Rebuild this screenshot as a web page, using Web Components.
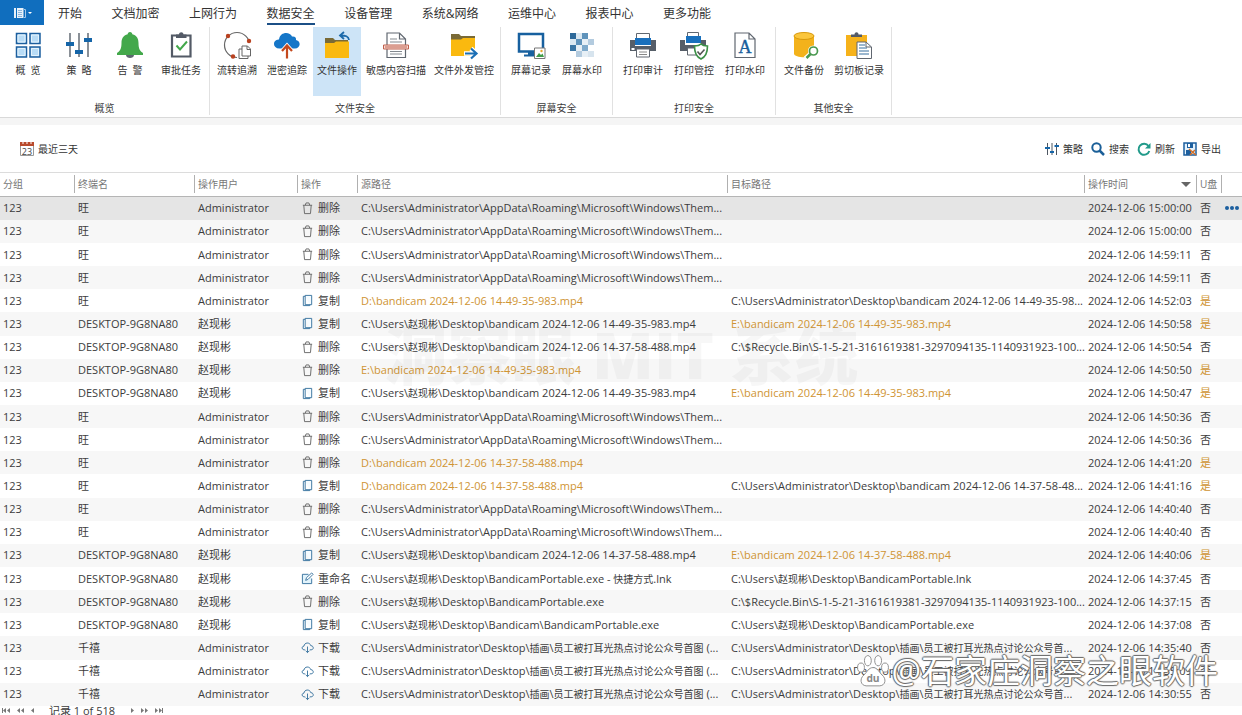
<!DOCTYPE html>
<html lang="zh-CN">
<head>
<meta charset="UTF-8">
<meta name="viewport" content="width=device-width, initial-scale=1.0">
<title>文件操作</title>
<style>
  body {
    margin: 0;
    font-family: "Open Sans", "Noto Sans CJK SC", sans-serif;
    font-size: 11px;
    color: #3c3c3c;
    background: #fff;
  }
</style>
</head>
<body>
<audit-app></audit-app>

<script>
const BLUE = "#1565a8";

// Large icons use a 28 unit box, small ones a 14 unit box
const icons = {
  grid: [28, `<g fill="#b8dcf6" stroke="#1d5f9e" stroke-width="1.5"><path d="M2.5 2.5h10v10h-10zM16 2.5h10v10H16zM2.5 16h10v10h-10zM16 16h10v10H16z"/></g><path d="M4 4h7v7H4zM17.500 4h7v7h-7zM4 17.500h7v7H4zM17.500 17.500h7v7h-7z" fill="none" stroke="#e4f3fd"/>`],
  sliders: [28, `<path d="M5 2v24M14 2v24M23 2v24" stroke="#4d5661" stroke-width="1.300"/><path d="M1 11h8v4H1zM10 19h8v4h-8zM19 7h8v4h-8z" fill="${BLUE}"/>`],
  bell: [28, `<path d="M10 24h8c0 4-8 4-8 0z" fill="#5d6670"/><path d="M14 1c1.500 0 2.300 1 2.300 2.300C21 4.500 22.500 8 22.500 12c0 6 1.500 8 4.500 10v2H1v-2c3-2 4.500-4 4.500-10 0-4 1.500-7.500 6.200-8.700C11.700 2 12.500 1 14 1z" fill="#43a84b"/>`],
  task: [28, `<path d="M5 4.500h18.500v21H5z" fill="#fff" stroke="#535a66" stroke-width="2.200"/><path d="M9 7V3.500h3c0-3 4.500-3 4.500 0h3V7z" fill="#535a66"/><path d="M9.500 14.500l3.500 4 7-8" fill="none" stroke="#43a84b" stroke-width="2"/>`],
  trace: [28, `<circle cx="14" cy="14" r="12.500" fill="none" stroke="#666" stroke-width="1.200"/><path d="M14 12h16v16H14z" fill="#fff"/><g fill="#b9411f"><circle cx="5" cy="5" r="2.200"/><circle cx="26" cy="10" r="2.200"/><circle cx="10" cy="25.500" r="2.200"/></g><path d="M19 18h-3v9.500h9V25M19 15h5.500l3 3v7H19zM24 15v3.500h3.500" fill="#fff" stroke="#666"/>`],
  cloud: [28, `<path d="M6.500 17.500C-1 17.500-.500 8 6 8.500 7 .500 17 .500 19 5.500c3-.500 4.500 1.500 4 3.500 5.500 1 4.500 8.500-1 8.500z" fill="#1576c8"/><path d="M14 28V15M8.500 20.500L14 14.500l5.500 6" fill="none" stroke="#fff" stroke-width="4"/><path d="M14 27.500V15M9 20l5-5.500 5 5.500" fill="none" stroke="#c4491d" stroke-width="2.200"/>`],
  folderBack: [28, `<path d="M2 7h8l2 2h13v4H2z" fill="#7a6a36"/><path d="M2 12h9l2-1.500h13V27H2z" fill="#fab90f"/><path d="M17.500 4.500c5 0 8 .500 8.500 4.500M21 1l-4 3.500L21 8" fill="none" stroke="#1c6aab" stroke-width="1.800"/>`],
  scan: [28, `<path d="M5 2h12.500l6 6v18.500H5zM17.500 2v6h6" fill="#fff" stroke="#606770" stroke-width="1.200"/><path d="M8 8h7M8 11h12M8 20.500h12M8 23h12" stroke="#83898f"/><path d="M1.500 14h25v4h-25z" fill="#f7dcd6" stroke="#c0604c"/><path d="M3 16h22" stroke="#c0604c"/>`],
  folderOut: [28, `<path d="M1 3h8l2 2h14v4H1z" fill="#7a6a36"/><path d="M1 8.500h10l2-1.500h12v18H1z" fill="#fab90f"/><path d="M14 22.500h12M21 17.500l5.500 5-5.500 5" fill="none" stroke="#fff" stroke-width="4.500"/><path d="M15 22.500h11M21 17.500l5.500 5-5.500 5" fill="none" stroke="#1c6fb5" stroke-width="2.200"/>`],
  screen: [28, `<path d="M2 3h24v17.500H2z" fill="#fff" stroke="#17609f" stroke-width="2.500"/><path d="M11 21h6v3h-6zM7 23.500h11v2H7z" fill="#17609f"/><path d="M17.500 17h10.500v10.500H17.500z" fill="#fff" stroke="#777"/><path d="M19 26l3-4 2 2 1.500-1.500 1.500 3.500z" fill="#419c49"/><circle cx="24.500" cy="20" r="1.200" fill="#e5a72a"/>`],
  mosaic: [28, `<path d="M2 2h6v6H2z" fill="#2d699a"/><path d="M14 2h6v6h-6zM8 8h6v6H8z" fill="#5f93bb"/><path d="M2 14h6v6H2z" fill="#3b76a4"/><path d="M14 14h6v6h-6z" fill="#7faacb"/><path d="M8 2h6v6H8zM2 8h6v6H2z" fill="#dbe8f1"/><path d="M20 8h6v6h-6zM8 20h6v6H8z" fill="#b3cbdf"/><path d="M20 20h6v6h-6z" fill="#d7e4ee"/><path d="M14 8h6v6h-6zM8 14h6v6H8zM14 20h6v6h-6z" fill="#e7eff5"/>`],
  printer: [28, `<path d="M7.500 2.500h13V9h-13z" fill="#fff" stroke="#606770"/><path d="M1 9h5v6h16V9h5v11H1z" fill="#565e68"/><path d="M6 7h16v7H6z" fill="#1970bd"/><path d="M7.500 18h13v8h-13z" fill="#fff" stroke="#606770"/><path d="M10 21h8M10 23.500h8" stroke="#888"/><path d="M2.500 17h3v2h-3z" fill="#fff"/>`],
  printerShield: [28, `<path d="M7.500 1.500h11V7h-11z" fill="#fff" stroke="#606770"/><path d="M0 9h5v5h16V9h5v11H0z" fill="#565e68"/><path d="M6 5h15v7H6z" fill="#1970bd"/><path d="M7.500 17h9v7h-9z" fill="#fff" stroke="#606770"/><path d="M21 13c2 2 4.500 2 6.500 2 0 7-2 11-6.500 13-4.500-2-6.500-6-6.500-13 2 0 4.500 0 6.500-2z" fill="#fff" stroke="#3c9047" stroke-width="1.600"/><path d="M17.500 20.500l2.500 3 4.500-5" fill="none" stroke="#555" stroke-width="1.600"/>`],
  letterPage: [28, `<path d="M4 2h14l6 6v18.500H4zM18 2v6h6" fill="#fff" stroke="#606770" stroke-width="1.200"/><text x="14" y="22" text-anchor="middle" font-family="Liberation Serif, serif" font-size="18" fill="#185e9c" stroke="#185e9c" stroke-width=".4">A</text>`],
  database: [28, `<path d="M4 5v17.500c0 5 20 5 20 0V5z" fill="#f3b21b"/><ellipse cx="14" cy="5" rx="10" ry="3.500" fill="#fbc63c" stroke="#d8990c"/><circle cx="23.500" cy="20" r="5.500" fill="#fff"/><path d="M20 23.500l-4.500 4" stroke="#fff" stroke-width="5"/><circle cx="23.500" cy="20" r="4" fill="#fff" stroke="#48984e" stroke-width="1.700"/><path d="M20.500 23l-4 4" stroke="#48984e" stroke-width="2.500"/>`],
  clipboard: [28, `<path d="M1 4h21v21H1z" fill="#f6b21a"/><path d="M6 6V3.500h3.500c0-3 4-3 4 0H17V6z" fill="#535a66"/><path d="M12 11h9l5.500 5v11.500H12z" fill="#fff" stroke="#606770"/><path d="M14 14h6M14 17h8M14 20h10M14 23h10" stroke="#356f9f"/><path d="M21 11v5h5.500" fill="none" stroke="#606770"/>`],
  policy: [14, `<path d="M2.500 1v12M7 1v12M11.500 1v12" stroke="#4d5661"/><path d="M0 5h5v2H0zM5 9h4v2H5zM9.500 3H14v2H9.500z" fill="${BLUE}"/>`],
  search: [14, `<circle cx="5.500" cy="5.500" r="4.200" fill="none" stroke="#1b5f98" stroke-width="2"/><path d="M8.500 8.500L13 13" stroke="#1b5f98" stroke-width="2.500"/>`],
  refresh: [14, `<path d="M11.500 4A5.500 5.500 0 1 0 12.300 9" fill="none" stroke="#219a8a" stroke-width="2"/><path d="M13.500 1v5.500H8z" fill="#219a8a"/>`],
  save: [14, `<path d="M1 1h12v12H1z" fill="#e4f2fc" stroke="#1d5f9e" stroke-width="1.500"/><path d="M4 1h6v5H4zM3 8h5v5H3z" fill="#1d5f9e"/><path d="M5 2h2v3H5z" fill="#fff"/><path d="M6 7l7 6M12 8l-5 5" stroke="#d37028" stroke-width="1.500"/>`],
  calendar: [14, `<path d="M.500 1.500h13v12H.500z" fill="#fff" stroke="#999"/><path d="M0 0h14v4H0z" fill="#b94a2c"/><path d="M3 0v2M7 0v2M11 0v2" stroke="#fff"/><text x="7" y="12.500" text-anchor="middle" font-size="9" fill="#444">23</text>`],
  trash: [14, `<path d="M2 3.500h10M4.500 3.500L5.500 1h3l1 2.500M3 3.500l.800 9h6.400l.800-9" fill="none" stroke="#666"/>`],
  copy: [14, `<path d="M4.500 1.500h7v10h-7zM4.500 2.500h-2v10h7v-1" fill="#f5fbff" stroke="#35709d"/>`],
  rename: [14, `<path d="M8 2.500H1.500v10h10V7" fill="#e2f3fb" stroke="#35709d"/><path d="M5 9l1-3 5.500-5 1.500 1.500-5.500 5.500z" fill="#fff" stroke="#35709d"/>`],
  download: [14, `<path d="M4.500 9.500H3.500C.500 9.500.500 5.500 3.200 5.500 3.500 1.500 9.500.800 10.500 5c3.500 0 3.500 4.500.500 4.500H9.500" fill="none" stroke="#35709d"/><path d="M7 6v6.500M5 10.500l2 2 2-2" fill="none" stroke="#35709d"/>`],
  ledger: [14, `<path d="M1 2h9.500v10H1z" fill="#e8f1f9"/><path d="M3.500 2v10" stroke="#106ebe"/><path d="M5 4.500h4M5 6.500h4M5 8.500h4M5 10.500h4" stroke="#8bb5dc"/><path d="M11 3.500h1.500v8H11" fill="none" stroke="#9fc4e6"/>`],
  paw: [28, `<g fill="#fff" stroke="#888" stroke-width=".8"><ellipse cx="9.500" cy="5" rx="3" ry="4.500"/><ellipse cx="18.500" cy="5" rx="3" ry="4.500"/><ellipse cx="3.500" cy="11" rx="3" ry="4"/><ellipse cx="24.500" cy="11" rx="3" ry="4"/><path d="M14 11c4 0 5 4 8 6.500 4 3.500 3 9-2 9.500H8c-5-.500-6-6-2-9.500C9 15 10 11 14 11z"/></g><text x="14" y="24" text-anchor="middle" font-size="9" font-weight="700" fill="#888">du</text>`]
};

class UiIcon extends HTMLElement {
  connectedCallback() {
    const [box, body] = icons[this.getAttribute("name")];
    this.attachShadow({ mode: "open" }).innerHTML = `
      <style>
        :host { display: block; flex: none; width: ${box}px; height: ${box}px; }
        svg { display: block; width: 100%; height: 100%; overflow: visible; }
      </style>
      <svg viewBox="0 0 ${box} ${box}" aria-hidden="true">${body}</svg>
    `;
  }
}

class MenuTabs extends HTMLElement {
  connectedCallback() {
    const tabs = ["开始", "文档加密", "上网行为", "数据安全", "设备管理", "系统&amp;网络", "运维中心", "报表中心", "更多功能"];
    this.attachShadow({ mode: "open" }).innerHTML = `
      <style>
        :host { display: flex; height: 25px; }
        .file {
          display: flex;
          align-items: center;
          justify-content: center;
          gap: 1px;
          width: 44px;
          padding: 0;
          border: 0;
          background: #106ebe;
        }
        .file::after {
          content: "";
          border: 2px solid transparent;
          border-top-color: #fff;
          border-bottom: 0;
        }
        nav {
          display: flex;
          justify-content: space-between;
          flex: 0 1 653px;
          margin-left: 14px;
        }
        a {
          box-sizing: border-box;
          height: 25px;
          font-size: 12px;
          line-height: 28px;
          color: #333;
          text-decoration: none;
          white-space: nowrap;
        }
        a.active { border-bottom: 2px solid #1b4f86; }
      </style>
      <button class="file" aria-label="菜单"><ui-icon name="ledger"></ui-icon></button>
      <nav>${tabs.map(t => `<a href="#"${t === "数据安全" ? ' class="active"' : ""}>${t}</a>`).join("")}</nav>
    `;
  }
}

class RibbonGroup extends HTMLElement {
  connectedCallback() {
    this.attachShadow({ mode: "open" }).innerHTML = `
      <style>
        :host {
          display: flex;
          flex-direction: column;
          border-right: 1px solid #e1e1e1;
          padding: 0 var(--pad, 4px);
        }
        .items { display: flex; gap: var(--gap, 3px); }
        .title {
          margin-top: 5px;
          font-size: 10px;
          line-height: 14px;
          text-align: center;
        }
      </style>
      <div class="items"><slot></slot></div>
      <div class="title">${this.getAttribute("label")}</div>
    `;
  }
}

class RibbonButton extends HTMLElement {
  connectedCallback() {
    this.attachShadow({ mode: "open" }).innerHTML = `
      <style>
        :host { display: block; }
        button {
          display: flex;
          flex-direction: column;
          align-items: center;
          gap: 4px;
          min-width: 48px;
          height: 69px;
          padding: 4px 3px 0;
          border: 0;
          background: none;
          font: inherit;
          font-size: 10px;
          line-height: 14px;
          color: #333;
        }
        span { white-space: pre; }
        :host([active]) button { background: #cde4f7; }
      </style>
      <button><ui-icon name="${this.getAttribute("icon")}"></ui-icon><span><slot></slot></span></button>
    `;
  }
}

class ToolButton extends HTMLElement {
  connectedCallback() {
    this.attachShadow({ mode: "open" }).innerHTML = `
      <style>
        :host { display: block; }
        button {
          display: flex;
          align-items: center;
          gap: 4px;
          padding: 0;
          border: 0;
          background: none;
          font: inherit;
          font-size: 10px;
          line-height: 14px;
          color: #333;
        }
      </style>
      <button><ui-icon name="${this.getAttribute("icon")}"></ui-icon><span><slot></slot></span></button>
    `;
  }
}

const THEMES = "C:\\Users\\Administrator\\AppData\\Roaming\\Microsoft\\Windows\\Them...";
const CN_DESK = "C:\\Users\\赵现彬\\Desktop\\";
const ADMIN_DESK = "C:\\Users\\Administrator\\Desktop\\";
const RECYCLE = "C:\\$Recycle.Bin\\S-1-5-21-3161619381-3297094135-1140931923-100...";
const POSTER = ADMIN_DESK + "插画\\员工被打耳光热点讨论公众号首图 (...";
const POSTER_TO = ADMIN_DESK + "插画\\员工被打耳光热点讨论公众号首...";
const V49 = "bandicam 2024-12-06 14-49-35-983.mp4";
const V37 = "bandicam 2024-12-06 14-37-58-488.mp4";
const W = ["旺", "Administrator"];
const Z = ["DESKTOP-9G8NA80", "赵现彬"];
const Q = ["千禧", "Administrator"];

// [host and user, action, source, target, time, usb]
const records = [
  [W, "删除", THEMES, "", "15:00:00", 0],
  [W, "删除", THEMES, "", "15:00:00", 0],
  [W, "删除", THEMES, "", "14:59:11", 0],
  [W, "删除", THEMES, "", "14:59:11", 0],
  [W, "复制", "D:\\" + V49, ADMIN_DESK + "bandicam 2024-12-06 14-49-35-98...", "14:52:03", 1],
  [Z, "复制", CN_DESK + V49, "E:\\" + V49, "14:50:58", 1],
  [Z, "删除", CN_DESK + V37, RECYCLE, "14:50:54", 0],
  [Z, "删除", "E:\\" + V49, "", "14:50:50", 1],
  [Z, "复制", CN_DESK + V49, "E:\\" + V49, "14:50:47", 1],
  [W, "删除", THEMES, "", "14:50:36", 0],
  [W, "删除", THEMES, "", "14:50:36", 0],
  [W, "删除", "D:\\" + V37, "", "14:41:20", 1],
  [W, "复制", "D:\\" + V37, ADMIN_DESK + "bandicam 2024-12-06 14-37-58-48...", "14:41:16", 1],
  [W, "删除", THEMES, "", "14:40:40", 0],
  [W, "删除", THEMES, "", "14:40:40", 0],
  [Z, "复制", CN_DESK + V37, "E:\\" + V37, "14:40:06", 1],
  [Z, "重命名", CN_DESK + "BandicamPortable.exe - 快捷方式.lnk", CN_DESK + "BandicamPortable.lnk", "14:37:45", 0],
  [Z, "删除", CN_DESK + "BandicamPortable.exe", RECYCLE, "14:37:15", 0],
  [Z, "复制", CN_DESK + "Bandicam\\BandicamPortable.exe", CN_DESK + "BandicamPortable.exe", "14:37:08", 0],
  [Q, "下载", POSTER, POSTER_TO, "14:35:40", 0],
  [Q, "下载", POSTER, POSTER_TO, "14:35:09", 0],
  [Q, "下载", POSTER, POSTER_TO, "14:30:55", 0]
];

const actionIcons = { "删除": "trash", "复制": "copy", "重命名": "rename", "下载": "download" };

class RecordTable extends HTMLElement {
  connectedCallback() {
    const han = p => p.replace(/[\u4e00-\u9fff]+/g, '<span class="han">$&</span>');
    const path = p => `<td${/^[DE]:/.test(p) ? ' class="usb"' : ""}>${han(p)}</td>`;
    const rows = records.map(([who, action, from, to, time, usb], i) => `
      <tr>
        <td>123</td><td>${who[0]}</td><td>${who[1]}</td>
        <td><span class="action"><ui-icon name="${actionIcons[action]}"></ui-icon>${action}</span></td>
        ${path(from)}${path(to)}
        <td>2024-12-06 ${time}</td>
        <td${usb ? ' class="usb"' : ""}>${usb ? "是" : "否"}</td>
        <td>${i === 0 ? '<button aria-label="更多"><i></i><i></i><i></i></button>' : ""}</td>
      </tr>`).join("");

    this.attachShadow({ mode: "open" }).innerHTML = `
      <style>
        :host { display: block; }
        table {
          width: 100%;
          height: 100%;
          table-layout: fixed;
          border-collapse: collapse;
        }
        th, td {
          padding: 0 0 0 4px;
          line-height: 16px;
          text-align: left;
          white-space: nowrap;
        }
        th:first-child, td:first-child { padding-left: 3px; }
        thead tr { height: 23px; border-bottom: 1px solid #b5b5b5; }
        th {
          padding: 0;
          font-size: 10px;
          font-weight: 400;
          color: #777;
        }
        th span {
          display: flex;
          align-items: center;
          justify-content: space-between;
          height: 18px;
          padding-left: 3px;
          border-left: 1px solid #b0b0b0;
        }
        th:first-child span { border-left: 0; padding: 0; }
        th:last-child span { padding: 0; }
        .sorted::after {
          content: "";
          margin-right: 5px;
          border: 5px solid transparent;
          border-top-color: #666;
          border-bottom: 0;
        }
        tbody tr:nth-child(even) { background: #f7f7f7; }
        tbody tr:first-child { background: #e5e5e5; }
        .usb { color: #cf9433; }
        .han { font-size: 10px; }
        .action { display: flex; align-items: center; gap: 4px; }
        ui-icon { width: 13px; height: 13px; }
        button {
          display: flex;
          gap: 1px;
          padding: 0;
          border: 0;
          background: none;
        }
        i { width: 4px; height: 4px; border-radius: 50%; background: #1c5f9f; }
      </style>
      <table>
        <colgroup>
          <col style="width: 74px"><col style="width: 120px"><col style="width: 103px">
          <col style="width: 60px"><col style="width: 370px"><col>
          <col style="width: 112px"><col style="width: 25px"><col style="width: 21px">
        </colgroup>
        <thead>
          <tr>
            <th><span>分组</span></th><th><span>终端名</span></th><th><span>操作用户</span></th>
            <th><span>操作</span></th><th><span>源路径</span></th><th><span>目标路径</span></th>
            <th><span class="sorted">操作时间</span></th><th><span>U盘</span></th><th><span></span></th>
          </tr>
        </thead>
        <tbody>${rows}</tbody>
      </table>
    `;
  }
}

class RecordPager extends HTMLElement {
  connectedCallback() {
    const L = x => `M${x + 3} 1L${x} 3.500L${x + 3} 6z`;
    const R = x => `M${x} 1L${x + 3} 3.500L${x} 6z`;
    const btn = (label, w, d) => `<button aria-label="${label}"><svg width="${w}" height="7" fill="#777">${d}</svg></button>`;
    this.attachShadow({ mode: "open" }).innerHTML = `
      <style>
        :host {
          display: flex;
          align-items: center;
          height: 9px;
          padding-left: 2px;
          line-height: 9px;
        }
        .nav { display: flex; gap: 7px; }
        button { display: block; padding: 0; border: 0; background: none; }
        svg { display: block; }
        .count { margin: 0 16px 0 15px; }
      </style>
      <div class="nav">
        ${btn("第一页", 8, `<path d="M0 1h1v5H0z${L(1)}${L(5)}"/>`)}
        ${btn("快退", 7, `<path d="${L(0)}${L(4)}"/>`)}
        ${btn("上一条", 3, `<path d="${L(0)}"/>`)}
      </div>
      <span class="count">记录 1 of 518</span>
      <div class="nav">
        ${btn("下一条", 3, `<path d="${R(0)}"/>`)}
        ${btn("快进", 7, `<path d="${R(0)}${R(4)}"/>`)}
        ${btn("最后一页", 8, `<path d="${R(0)}${R(4)}M7 1h1v5H7z"/>`)}
      </div>
    `;
  }
}

class AuditApp extends HTMLElement {
  connectedCallback() {
    this.attachShadow({ mode: "open" }).innerHTML = `
      <style>
        :host {
          position: relative;
          display: flex;
          flex-direction: column;
          height: 100vh;
          overflow: hidden;
        }
        .ribbon {
          display: flex;
          flex: none;
          padding: 2px 0;
          border-bottom: 1px solid #d9d9d9;
        }
        .strip { flex: none; height: 7px; background: #f5f5f5; }
        .toolbar {
          display: flex;
          flex: none;
          align-items: center;
          justify-content: space-between;
          height: 47px;
          padding: 0 21px 0 20px;
          border-bottom: 1px solid #dcdcdc;
        }
        .tools { display: flex; gap: 8px; }
        record-table { flex: 1; min-height: 0; }
        record-pager { flex: none; }
        .mark { position: absolute; pointer-events: none; white-space: nowrap; }
        .center {
          top: 310px;
          left: 0;
          right: 0;
          text-align: center;
          font-size: 64px;
          line-height: 90px;
          font-weight: 900;
          color: rgba(0, 0, 0, .03);
        }
        .corner {
          display: flex;
          align-items: center;
          gap: 2px;
          right: 24px;
          bottom: 22px;
          font-size: 33px;
          line-height: 44px;
          color: #fff;
          text-shadow: 1px 0 1px #666, -1px 0 1px #666, 0 1px 1px #666, 0 -1px 1px #666;
        }
        .corner ui-icon { width: 32px; height: 32px; text-shadow: none; }
      </style>
      <menu-tabs></menu-tabs>
      <div class="ribbon">
        <ribbon-group label="概览">
          <ribbon-button icon="grid">概  览</ribbon-button>
          <ribbon-button icon="sliders">策  略</ribbon-button>
          <ribbon-button icon="bell">告  警</ribbon-button>
          <ribbon-button icon="task">审批任务</ribbon-button>
        </ribbon-group>
        <ribbon-group label="文件安全" style="--gap: 2px; --pad: 3px">
          <ribbon-button icon="trace">流转追溯</ribbon-button>
          <ribbon-button icon="cloud">泄密追踪</ribbon-button>
          <ribbon-button icon="folderBack" active>文件操作</ribbon-button>
          <ribbon-button icon="scan">敏感内容扫描</ribbon-button>
          <ribbon-button icon="folderOut">文件外发管控</ribbon-button>
        </ribbon-group>
        <ribbon-group label="屏幕安全" style="--pad: 6px">
          <ribbon-button icon="screen">屏幕记录</ribbon-button>
          <ribbon-button icon="mosaic">屏幕水印</ribbon-button>
        </ribbon-group>
        <ribbon-group label="打印安全" style="--pad: 6px">
          <ribbon-button icon="printer">打印审计</ribbon-button>
          <ribbon-button icon="printerShield">打印管控</ribbon-button>
          <ribbon-button icon="letterPage">打印水印</ribbon-button>
        </ribbon-group>
        <ribbon-group label="其他安全">
          <ribbon-button icon="database">文件备份</ribbon-button>
          <ribbon-button icon="clipboard">剪切板记录</ribbon-button>
        </ribbon-group>
      </div>
      <div class="strip"></div>
      <div class="toolbar">
        <tool-button icon="calendar">最近三天</tool-button>
        <div class="tools">
          <tool-button icon="policy">策略</tool-button>
          <tool-button icon="search">搜索</tool-button>
          <tool-button icon="refresh">刷新</tool-button>
          <tool-button icon="save">导出</tool-button>
        </div>
      </div>
      <record-table></record-table>
      <record-pager></record-pager>
      <div class="mark center">洞察眼 MIT 系统</div>
      <div class="mark corner"><ui-icon name="paw"></ui-icon><span>@石家庄洞察之眼软件</span></div>
    `;
  }
}

customElements.define("ui-icon", UiIcon);
customElements.define("menu-tabs", MenuTabs);
customElements.define("ribbon-group", RibbonGroup);
customElements.define("ribbon-button", RibbonButton);
customElements.define("tool-button", ToolButton);
customElements.define("record-table", RecordTable);
customElements.define("record-pager", RecordPager);
customElements.define("audit-app", AuditApp);
</script>
</body>
</html>
